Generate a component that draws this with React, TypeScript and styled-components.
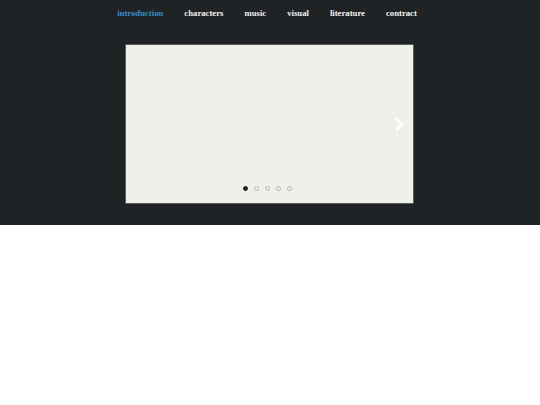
import styled, { createGlobalStyle } from 'styled-components'

const GlobalStyle = createGlobalStyle`
  html, body {
    margin: 0;
    padding: 0;
    background: #ffffff;
  }
`

const links = ['introduction', 'characters', 'music', 'visual', 'literature', 'contract']

export default function App() {
  return (
    <>
      <GlobalStyle />
      <Header>
        <Nav>
          {links.map((l, i) => (
            <NavLink key={l} $active={i === 0}>
              {l}
            </NavLink>
          ))}
        </Nav>
        <Slider>
          <NextButton aria-label="next">
            <svg width="10" height="15" viewBox="0 0 10 15">
              <path d="M2 1.5 L8 7.5 L2 13.5" fill="none" stroke="#ffffff" strokeWidth="2.6" />
            </svg>
          </NextButton>
          <Dots>
            {[0, 1, 2, 3, 4].map((d) => (
              <Dot key={d} $active={d === 0} />
            ))}
          </Dots>
        </Slider>
      </Header>
    </>
  )
}

const Header = styled.section`
  background: #1f2326;
  height: 225px;
  display: flex;
  flex-direction: column;
  align-items: center;
`

const Nav = styled.nav`
  display: flex;
  gap: 21px;
  height: 44px;
  padding-top: 8px;
  box-sizing: border-box;
  padding-right: 6px;
`

const NavLink = styled.a<{ $active?: boolean }>`
  font-family: 'Liberation Serif', 'Times New Roman', serif;
  font-weight: bold;
  font-size: 8.7px;
  line-height: 11px;
  color: ${(p) => (p.$active ? '#3a8bc8' : '#f2f2f2')};
  cursor: pointer;
`

const Slider = styled.div`
  position: relative;
  width: 289px;
  height: 160px;
  box-sizing: border-box;
  background: #eff0ea;
  border: 1px solid #5a5e5f;
  margin-left: -1px;
`

const NextButton = styled.span`
  position: absolute;
  right: 9px;
  top: 72px;
  display: flex;
`

const Dots = styled.div`
  position: absolute;
  bottom: 12px;
  left: 0;
  right: 0;
  display: flex;
  justify-content: center;
  gap: 6px;
  padding-right: 4px;
`

const Dot = styled.span<{ $active?: boolean }>`
  width: 5px;
  height: 5px;
  border-radius: 50%;
  box-sizing: border-box;
  background: ${(p) => (p.$active ? '#222222' : 'transparent')};
  border: 1px solid ${(p) => (p.$active ? '#222222' : '#b8b8b4')};
`
